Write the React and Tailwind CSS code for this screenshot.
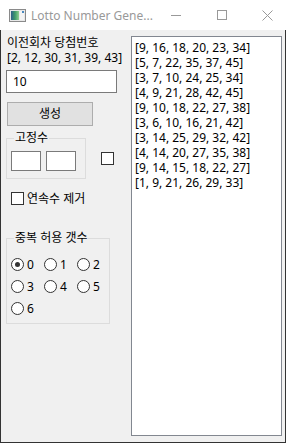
import React from "react";

const font = { fontFamily: '"Noto Sans", "Noto Sans CJK KR", sans-serif' };

const results = [
  "[9, 16, 18, 20, 23, 34]",
  "[5, 7, 22, 35, 37, 45]",
  "[3, 7, 10, 24, 25, 34]",
  "[4, 9, 21, 28, 42, 45]",
  "[9, 10, 18, 22, 27, 38]",
  "[3, 6, 10, 16, 21, 42]",
  "[3, 14, 25, 29, 32, 42]",
  "[4, 14, 20, 27, 35, 38]",
  "[9, 14, 15, 18, 22, 27]",
  "[1, 9, 21, 26, 29, 33]",
];

function AppIcon() {
  return (
    <svg width="17" height="13" viewBox="0 0 17 13">
      <defs>
        <linearGradient id="g" x1="0" y1="0" x2="1" y2="0">
          <stop offset="0" stopColor="#2f5f8a" />
          <stop offset="0.5" stopColor="#3f9a6a" />
          <stop offset="1" stopColor="#8fcf8f" />
        </linearGradient>
      </defs>
      <rect x="0.5" y="0.5" width="16" height="12" fill="#e8e8e8" stroke="#8a8a8a" />
      <rect x="2" y="2" width="8" height="9" fill="url(#g)" />
      <rect x="11" y="2" width="4" height="9" fill="#f4f4f4" />
      <rect x="13" y="2" width="2" height="2" fill="#4a8ac0" />
    </svg>
  );
}

function Radio({ label, checked }) {
  return (
    <div className="flex items-center h-[22px]">
      <div className="w-[13px] h-[13px] rounded-full border border-[#333] bg-white flex items-center justify-center">
        {checked && <div className="w-[5px] h-[5px] rounded-full bg-[#333]" />}
      </div>
      <span className="ml-[3px] text-[12px] leading-[15px] text-black">{label}</span>
    </div>
  );
}

export default function App() {
  return (
    <div className="w-[286px] h-[443px] flex flex-col bg-white overflow-hidden" style={font}>
      {/* Title bar */}
      <div className="h-[30px] flex items-center bg-white">
        <div className="ml-[9px] mt-[1px] flex items-center shrink-0">
          <AppIcon />
        </div>
        <span className="ml-[5px] text-[12px] text-[#999] leading-[15px] whitespace-nowrap">
          Lotto Number Gene...
        </span>
        <div className="flex-1" />
        <div className="w-[46px] h-[30px] flex items-center justify-center shrink-0">
          <div className="w-[10px] h-[1px] bg-[#999]" />
        </div>
        <div className="w-[46px] h-[30px] flex items-center justify-center shrink-0">
          <div className="w-[10px] h-[10px] border border-[#999]" />
        </div>
        <div className="w-[46px] h-[30px] flex items-center justify-center shrink-0">
          <svg width="11" height="11" viewBox="0 0 11 11">
            <path d="M0.5 0.5 L10.5 10.5 M10.5 0.5 L0.5 10.5" stroke="#999" strokeWidth="1" />
          </svg>
        </div>
      </div>

      {/* Content */}
      <div className="flex-1 flex bg-[#f0f0f0] border-l border-r border-b border-[#333] text-black">
        {/* Left column */}
        <div className="w-[130px] pl-[5px] pt-[5px] flex flex-col">
          <div className="text-[12px] leading-[15px] pl-[1px]">
            <div>이전회차 당첨번호</div>
            <div>[2, 12, 30, 31, 39, 43]</div>
          </div>
          <div className="mt-[5px] w-[111px] h-[23px] border border-[#7a7a7a] bg-white flex items-center pl-[6px] text-[12px]">
            10
          </div>
          <div className="mt-[9px] ml-[1px] w-[86px] h-[24px] border border-[#adadad] bg-[#e1e1e1] flex items-center justify-center text-[12px]">
            생성
          </div>
          <div className="flex items-start mt-[12px]">
            <div className="relative w-[80px] h-[41px] border border-[#dcdcdc]">
              <span className="absolute -top-[9px] left-[7px] px-[1px] bg-[#f0f0f0] text-[12px] leading-[15px]">
                고정수
              </span>
              <div className="flex gap-[5px] pl-[4px] pt-[12px]">
                <div className="w-[30px] h-[20px] border border-[#7a7a7a] bg-white" />
                <div className="w-[30px] h-[20px] border border-[#7a7a7a] bg-white" />
              </div>
            </div>
            <div className="ml-[15px] mt-[14px] w-[13px] h-[13px] border border-[#333] bg-white" />
          </div>
          <div className="mt-[12px] ml-[5px] flex items-center h-[15px]">
            <div className="w-[13px] h-[13px] border border-[#333] bg-white" />
            <span className="ml-[3px] text-[12px] leading-[15px]">연속수 제거</span>
          </div>
          <div className="relative mt-[32px] w-[104px] h-[86px] border border-[#dcdcdc]">
            <span className="absolute -top-[9px] left-[7px] px-[1px] bg-[#f0f0f0] text-[12px] leading-[15px]">
              중복 허용 갯수
            </span>
            <div className="grid grid-cols-[33px_33px_33px] pl-[4px] pt-[14px]">
              <Radio label="0" checked />
              <Radio label="1" />
              <Radio label="2" />
              <Radio label="3" />
              <Radio label="4" />
              <Radio label="5" />
              <Radio label="6" />
            </div>
          </div>
        </div>

        {/* Listbox */}
        <div className="mt-[6px] mb-[6px] mr-[3px] flex-1 border border-[#828790] bg-white pl-[3px] pt-[3px]">
          {results.map((r, i) => (
            <div key={i} className="text-[12px] leading-[15px] whitespace-nowrap">
              {r}
            </div>
          ))}
        </div>
      </div>
    </div>
  );
}
